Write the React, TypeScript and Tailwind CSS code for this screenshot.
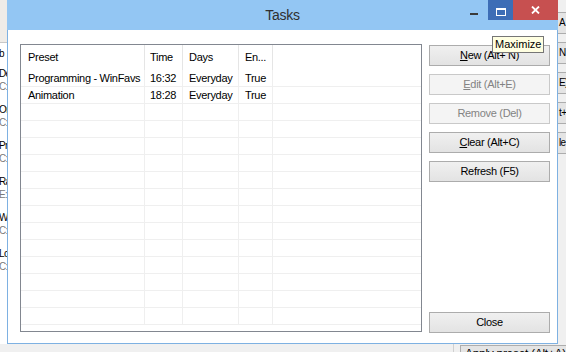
import React from "react";

type Row = { preset: string; time: string; days: string; enabled: string };

const rows: Row[] = [
  { preset: "Programming - WinFavs", time: "16:32", days: "Everyday", enabled: "True" },
  { preset: "Animation", time: "18:28", days: "Everyday", enabled: "True" },
  ...Array.from({ length: 13 }, () => ({ preset: "", time: "", days: "", enabled: "" })),
];

const behindItems = [
  { name: "De", path: "C:" },
  { name: "Or", path: "C:" },
  { name: "Pr", path: "C:" },
  { name: "Ra", path: "E:" },
  { name: "W", path: "C:" },
  { name: "Lo", path: "C:" },
];

const behindButtons = ["A", "N", "E)", "t+", "le"];

function Button({
  children,
  disabled,
}: {
  children: React.ReactNode;
  disabled?: boolean;
}) {
  return (
    <div
      className={
        disabled
          ? "h-[21px] w-full border border-[#c9c9c9] bg-[#f4f4f4] text-[#838383] text-center leading-[19px]"
          : "h-[21px] w-full border border-[#acacac] bg-gradient-to-b from-[#f0f0f0] to-[#e3e3e3] text-black text-center leading-[19px]"
      }
    >
      {children}
    </div>
  );
}

function TitleBar() {
  return (
    <div className="flex h-[30px] items-start bg-[#93c6f3]">
      <div className="w-[98px]" />
      <div className="flex-1 text-center text-[14px] leading-[31px] tracking-[-0.3px] text-[#2f2f2f]">
        Tasks
      </div>
      <div className="flex h-[20px] w-[98px]">
        <div className="flex w-[28px] items-start justify-center pt-[13px]">
          <div className="h-[2px] w-[8px] bg-[#3a3a3a]" />
        </div>
        <div className="flex w-[25px] items-start justify-center bg-[#3d6db6] pt-[8px]">
          <div className="h-[8px] w-[10px] border border-t-2 border-white" />
        </div>
        <div className="flex w-[45px] items-center justify-center bg-[#c75050]">
          <svg width="9" height="8" viewBox="0 0 9 8">
            <path d="M1 0.5 L8 7.5 M8 0.5 L1 7.5" stroke="white" strokeWidth="1.8" />
          </svg>
        </div>
      </div>
    </div>
  );
}

function TaskList() {
  return (
    <div className="h-[288px] w-[402px] overflow-hidden border border-[#828790] bg-white">
      <div className="flex h-[25px] leading-[25px]">
        <div className="w-[124px] border-r border-[#e5e5e5] pl-[7px]">Preset</div>
        <div className="w-[38px] border-r border-[#e5e5e5] pl-[5px]">Time</div>
        <div className="w-[56px] border-r border-[#e5e5e5] pl-[6px]">Days</div>
        <div className="w-[34px] border-r border-[#e5e5e5] pl-[6px]">En...</div>
      </div>
      {rows.map((r, i) => (
        <div key={i} className="flex h-[17px] border-b border-[#efefef] leading-[16px]">
          <div className="w-[124px] overflow-hidden whitespace-nowrap border-r border-[#efefef] pl-[7px]">
            {r.preset}
          </div>
          <div className="w-[38px] border-r border-[#efefef] pl-[5px]">{r.time}</div>
          <div className="w-[56px] border-r border-[#efefef] pl-[6px]">{r.days}</div>
          <div className="w-[34px] border-r border-[#efefef] pl-[6px]">{r.enabled}</div>
        </div>
      ))}
    </div>
  );
}

export default function App() {
  return (
    <div className="relative flex h-[352px] w-[566px] flex-col overflow-hidden bg-[#f0f0f0] font-['Liberation_Sans',Arial,sans-serif] text-[11px] tracking-[-0.3px] text-black">
      <div className="flex h-[344px] shrink-0">
        {/* window behind, left edge */}
        <div className="flex w-[7px] flex-col overflow-hidden bg-[#efece8]">
          <div className="mt-[42px] flex-1 whitespace-nowrap border-t border-[#c8c8c8] bg-white text-[10px] tracking-[-0.6px]">
            <div className="-ml-[1px] h-[22px] pt-[4px] leading-[13px]">b</div>
            {behindItems.map((it) => (
              <div key={it.name} className="-ml-[1px] h-[36px] pt-[2px] leading-[13px]">
                <div>{it.name}</div>
                <div className="text-[#7a7a7a]">{it.path}</div>
              </div>
            ))}
          </div>
        </div>

        {/* Tasks window */}
        <div className="flex w-[551px] flex-col">
          <TitleBar />
          <div className="flex flex-1 items-start gap-[7px] border-x border-b border-[#7eb1e2] bg-white pl-[12px] pt-[14px]">
            <TaskList />
            <div className="flex h-[289px] w-[121px] flex-col gap-[8px] pt-[1px]">
              <Button>
                <span className="underline underline-offset-1">N</span>ew (Alt+ N)
              </Button>
              <Button disabled>
                <span className="underline underline-offset-1">E</span>dit (Alt+E)
              </Button>
              <Button disabled>Remove (Del)</Button>
              <Button>
                <span className="underline underline-offset-1">C</span>lear (Alt+C)
              </Button>
              <Button>Refresh (F5)</Button>
              <div className="mt-auto">
                <Button>Close</Button>
              </div>
            </div>
          </div>
        </div>

        {/* window behind, right edge */}
        <div className="flex w-[8px] flex-col gap-[8px] overflow-hidden whitespace-nowrap pt-[12px] text-[10px] tracking-[-0.6px]">
          {behindButtons.map((b) => (
            <div key={b} className="h-[22px] border-y border-[#adadad] bg-[#e4e4e4] pl-[1px] leading-[20px]">
              {b}
            </div>
          ))}
        </div>
      </div>

      {/* window behind, bottom edge */}
      <div className="flex min-h-0 flex-1 overflow-hidden">
        <div className="w-[463px] border-r border-[#d0d0d0]" />
        <div className="ml-[6px] mt-[1px] flex-1 whitespace-nowrap border-l border-t border-[#adadad] bg-[#e4e4e4] pl-[4px] pt-[1px] text-[12px] leading-[14px]">
          Apply preset (Alt+A)
        </div>
      </div>

      {/* tooltip */}
      <div className="absolute left-[492px] top-[36px] h-[17px] border border-[#767676] bg-[#ffffe1] px-[2px] leading-[15px] tracking-normal">
        Maximize
      </div>
    </div>
  );
}
